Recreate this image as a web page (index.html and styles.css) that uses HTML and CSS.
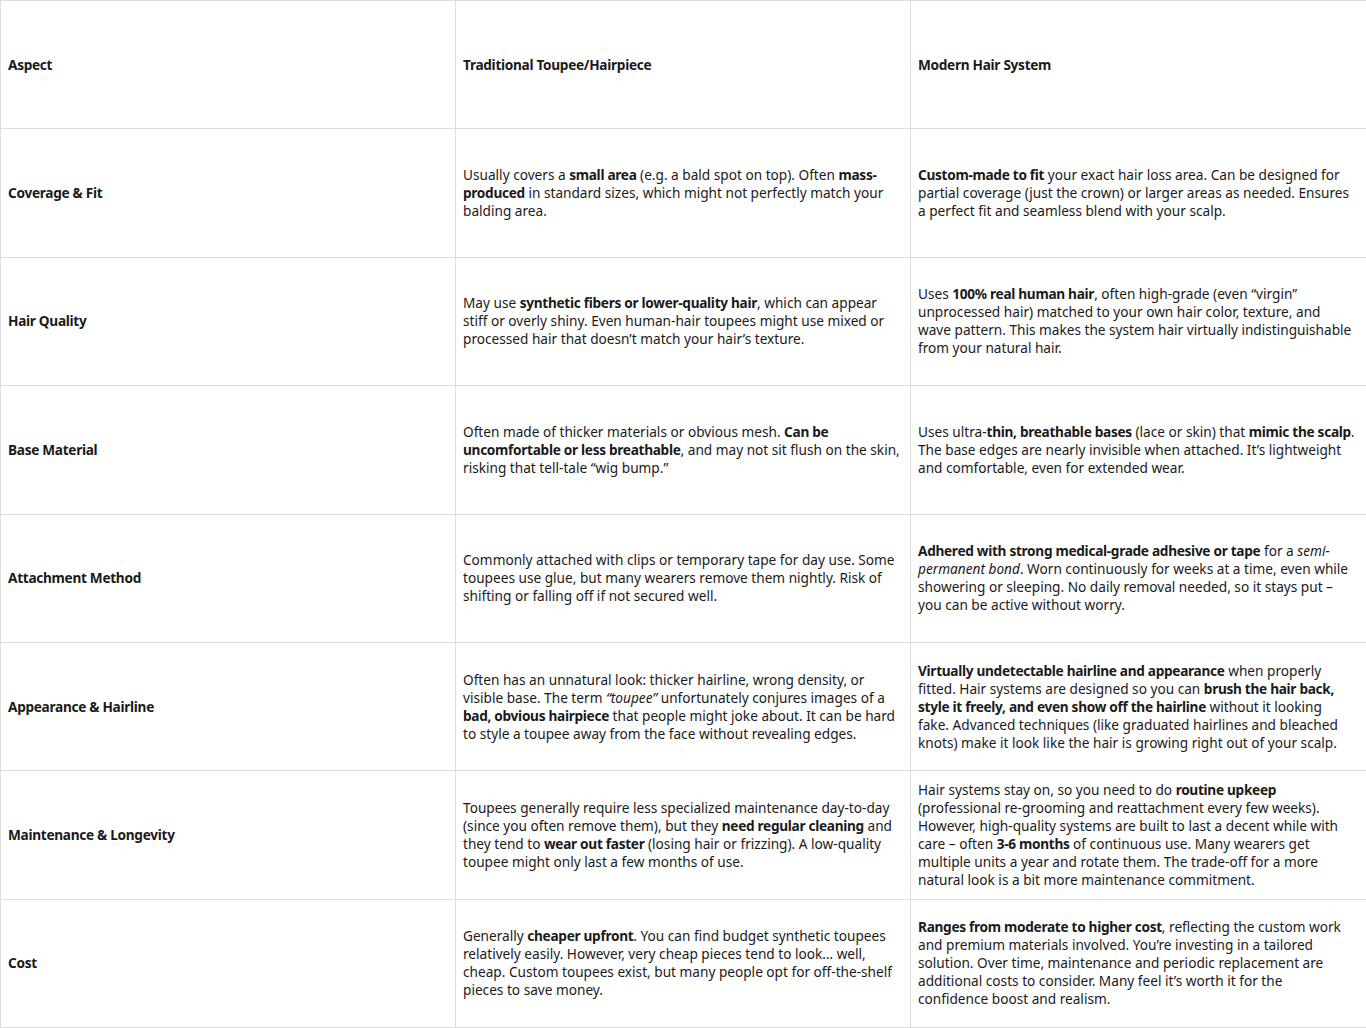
FILE: index.html
```html
<!DOCTYPE html>
<html>
<head>
<meta charset="utf-8">
<link rel="stylesheet" href="styles.css">
</head>
<body>
<table class="cmp">
<colgroup><col class="c1"><col class="c2"><col class="c3"></colgroup>
<tr><th>Aspect</th><th>Traditional Toupee/Hairpiece</th><th>Modern Hair System</th></tr>
<tr><th>Coverage &amp; Fit</th>
<td>Usually covers a <b>small area</b> (e.g. a bald spot on top). Often <b>mass-produced</b> in standard sizes, which might not perfectly match your balding area.</td>
<td><b>Custom-made to fit</b> your exact hair loss area. Can be designed for partial coverage (just the crown) or larger areas as needed. Ensures a perfect fit and seamless blend with your scalp.</td></tr>
<tr><th>Hair Quality</th>
<td>May use <b>synthetic fibers or lower-quality hair</b>, which can appear stiff or overly shiny. Even human-hair toupees might use mixed or processed hair that doesn’t match your hair’s texture.</td>
<td>Uses <b>100% real human hair</b>, often high-grade (even “virgin” unprocessed hair) matched to your own hair color, texture, and wave pattern. This makes the system hair virtually indistinguishable from your natural hair.</td></tr>
<tr><th>Base Material</th>
<td>Often made of thicker materials or obvious mesh. <b>Can be uncomfortable or less breathable</b>, and may not sit flush on the skin, risking that tell-tale “wig bump.”</td>
<td>Uses ultra-<b>thin, breathable bases</b> (lace or skin) that <b>mimic the scalp</b>. The base edges are nearly invisible when attached. It’s lightweight and comfortable, even for extended wear.</td></tr>
<tr><th>Attachment Method</th>
<td>Commonly attached with clips or temporary tape for day use. Some toupees use glue, but many wearers remove them nightly. Risk of shifting or falling off if not secured well.</td>
<td><b>Adhered with strong medical-grade adhesive or tape</b> for a <i>semi-permanent bond</i>. Worn continuously for weeks at a time, even while showering or sleeping. No daily removal needed, so it stays put – you can be active without worry.</td></tr>
<tr><th>Appearance &amp; Hairline</th>
<td>Often has an unnatural look: thicker hairline, wrong density, or visible base. The term <i>“toupee”</i> unfortunately conjures images of a <b>bad, obvious hairpiece</b> that people might joke about. It can be hard to style a toupee away from the face without revealing edges.</td>
<td><b>Virtually undetectable hairline and appearance</b> when properly fitted. Hair systems are designed so you can <b>brush the hair back, style it freely, and even show off the hairline</b> without it looking fake. Advanced techniques (like graduated hairlines and bleached knots) make it look like the hair is growing right out of your scalp.</td></tr>
<tr><th>Maintenance &amp; Longevity</th>
<td>Toupees generally require less specialized maintenance day-to-day (since you often remove them), but they <b>need regular cleaning</b> and they tend to <b>wear out faster</b> (losing hair or frizzing). A low-quality toupee might only last a few months of use.</td>
<td>Hair systems stay on, so you need to do <b>routine upkeep</b> (professional re-grooming and reattachment every few weeks). However, high-quality systems are built to last a decent while with care – often <b>3-6 months</b> of continuous use. Many wearers get multiple units a year and rotate them. The trade-off for a more natural look is a bit more maintenance commitment.</td></tr>
<tr><th>Cost</th>
<td>Generally <b>cheaper upfront</b>. You can find budget synthetic toupees relatively easily. However, very cheap pieces tend to look… well, cheap. Custom toupees exist, but many people opt for off-the-shelf pieces to save money.</td>
<td><b>Ranges from moderate to higher cost</b>, reflecting the custom work and premium materials involved. You’re investing in a tailored solution. Over time, maintenance and periodic replacement are additional costs to consider. Many feel it’s worth it for the confidence boost and realism.</td></tr>
</table>
</body>
</html>
```
FILE: styles.css
```css
html, body {
  margin: 0;
  padding: 0;
  background: #fff;
}
.cmp {
  width: 1366px;
  height: 1028px;
  border-collapse: collapse;
  table-layout: fixed;
  font-family: "Noto Sans", "Open Sans", sans-serif;
  font-size: 13.65px;
  line-height: 18px;
  color: #1a1a1a;
}
.cmp col.c1 { width: 455px; }
.cmp col.c2 { width: 455px; }
.cmp col.c3 { width: 456px; }
.cmp th, .cmp td {
  border: 1px solid #dedede;
  padding: 0 10px 0 7px;
  vertical-align: middle;
  text-align: left;
  height: 127px;
}
.cmp th {
  font-weight: 700;
  letter-spacing: -0.3px;
}
.cmp td { font-weight: 400; }
.cmp b {
  font-weight: 700;
  letter-spacing: -0.3px;
}
```
